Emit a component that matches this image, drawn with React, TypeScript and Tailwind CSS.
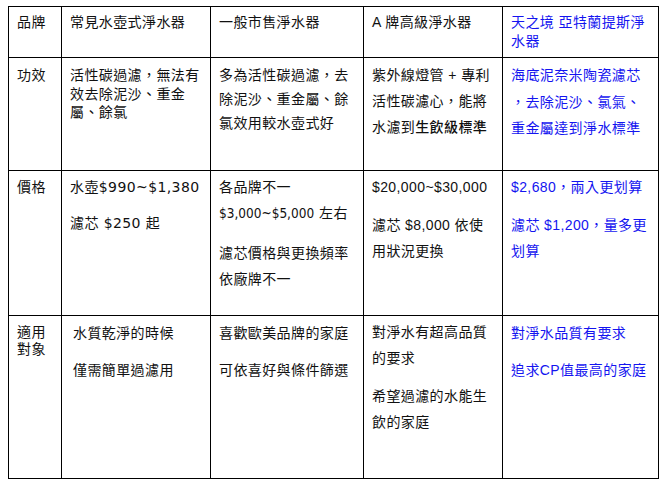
import React from "react";

const C =
  "border-r border-b border-black pl-[8px] pr-[1px] text-[14px] tracking-[0.4px] text-[#111] whitespace-nowrap overflow-hidden";
const LS = "font-['Liberation_Sans','Noto_Sans_CJK_TC',sans-serif]";
const DV = "font-['DejaVu_Sans','Noto_Sans_CJK_TC',sans-serif]";
const BLUE = "text-[#1414f0]";

export default function App() {
  return (
    <div className="w-[665px] h-[486px] bg-white overflow-hidden pt-[6px] pl-[8px]">
      <div className="w-[651px] border-l border-t border-black grid grid-cols-[53px_149px_153px_139px_156px] grid-rows-[51px_113px_145px_163px]">
        {/* Row 1 */}
        <div className={`${C} ${LS} pt-[6px] leading-[19px]`}>品牌</div>
        <div className={`${C} ${LS} pt-[6px] leading-[19px]`}>常見水壺式淨水器</div>
        <div className={`${C} ${LS} pt-[6px] leading-[19px]`}>一般市售淨水器</div>
        <div className={`${C} ${LS} pt-[6px] leading-[19px]`}>A 牌高級淨水器</div>
        <div className={`${C} ${LS} ${BLUE} pt-[6px] leading-[19px]`}>
          天之境 亞特蘭提斯淨
          <br />
          水器
        </div>

        {/* Row 2 */}
        <div className={`${C} ${LS} pt-[7px] leading-[20px]`}>功效</div>
        <div className={`${C} ${LS} pt-[8px] leading-[18.5px]`}>
          活性碳過濾，無法有
          <br />
          效去除泥沙、重金
          <br />
          屬、餘氯
        </div>
        <div className={`${C} ${LS} pt-[5px] leading-[24px]`}>
          多為活性碳過濾，去
          <br />
          除泥沙、重金屬、餘
          <br />
          氯效用較水壺式好
        </div>
        <div className={`${C} ${LS} pt-[4px] leading-[26px]`}>
          紫外線燈管 + 專利
          <br />
          活性碳濾心，能將
          <br />
          水濾到<span className="font-medium">生飲級標準</span>
        </div>
        <div className={`${C} ${LS} ${BLUE} pt-[4px] leading-[26.5px]`}>
          海底泥奈米陶瓷濾芯
          <br />
          ，去除泥沙、氯氣、
          <br />
          重金屬達到淨水標準
        </div>

        {/* Row 3 */}
        <div className={`${C} ${LS} pt-[6px] leading-[20px]`}>價格</div>
        <div className={`${C} ${DV} pt-[6px] leading-[20px]`}>
          <p>水壺$990~$1,380</p>
          <p className="mt-[16px]">濾芯 $250 起</p>
        </div>
        <div className={`${C} ${DV} pt-[3px] leading-[26px]`}>
          <p>
            各品牌不一
            <br />
            <span className="font-['DejaVu_Sans_Condensed','DejaVu_Sans',sans-serif] text-[13.5px] tracking-normal">
              $3,000~$5,000
            </span>{" "}
            左右
          </p>
          <p className="mt-[14px]">
            濾芯價格與更換頻率
            <br />
            依廠牌不一
          </p>
        </div>
        <div className={`${C} ${LS} pt-[3px] leading-[26px]`}>
          <p>$20,000~$30,000</p>
          <p className="mt-[12px]">
            濾芯 $8,000 依使
            <br />
            用狀況更換
          </p>
        </div>
        <div className={`${C} ${LS} ${BLUE} pt-[3px] leading-[26px]`}>
          <p>$2,680，兩入更划算</p>
          <p className="mt-[12px]">
            濾芯 $1,200，量多更
            <br />
            划算
          </p>
        </div>

        {/* Row 4 */}
        <div className={`${C} ${LS} pt-[8px] leading-[17px]`}>
          適用
          <br />
          對象
        </div>
        <div className={`${C} ${LS} pt-[7px] leading-[20px] pl-[11px]`}>
          <p>水質乾淨的時候</p>
          <p className="mt-[17px]">僅需簡單過濾用</p>
        </div>
        <div className={`${C} ${LS} pt-[7px] leading-[20px]`}>
          <p>喜歡歐美品牌的家庭</p>
          <p className="mt-[17px]">可依喜好與條件篩選</p>
        </div>
        <div className={`${C} ${LS} pt-[4px] leading-[25.5px]`}>
          <p>
            對淨水有超高品質
            <br />
            的要求
          </p>
          <p className="mt-[13px]">
            希望過濾的水能生
            <br />
            飲的家庭
          </p>
        </div>
        <div className={`${C} ${LS} ${BLUE} pt-[7px] leading-[20px]`}>
          <p>對淨水品質有要求</p>
          <p className="mt-[17px]">追求CP值最高的家庭</p>
        </div>
      </div>
    </div>
  );
}
